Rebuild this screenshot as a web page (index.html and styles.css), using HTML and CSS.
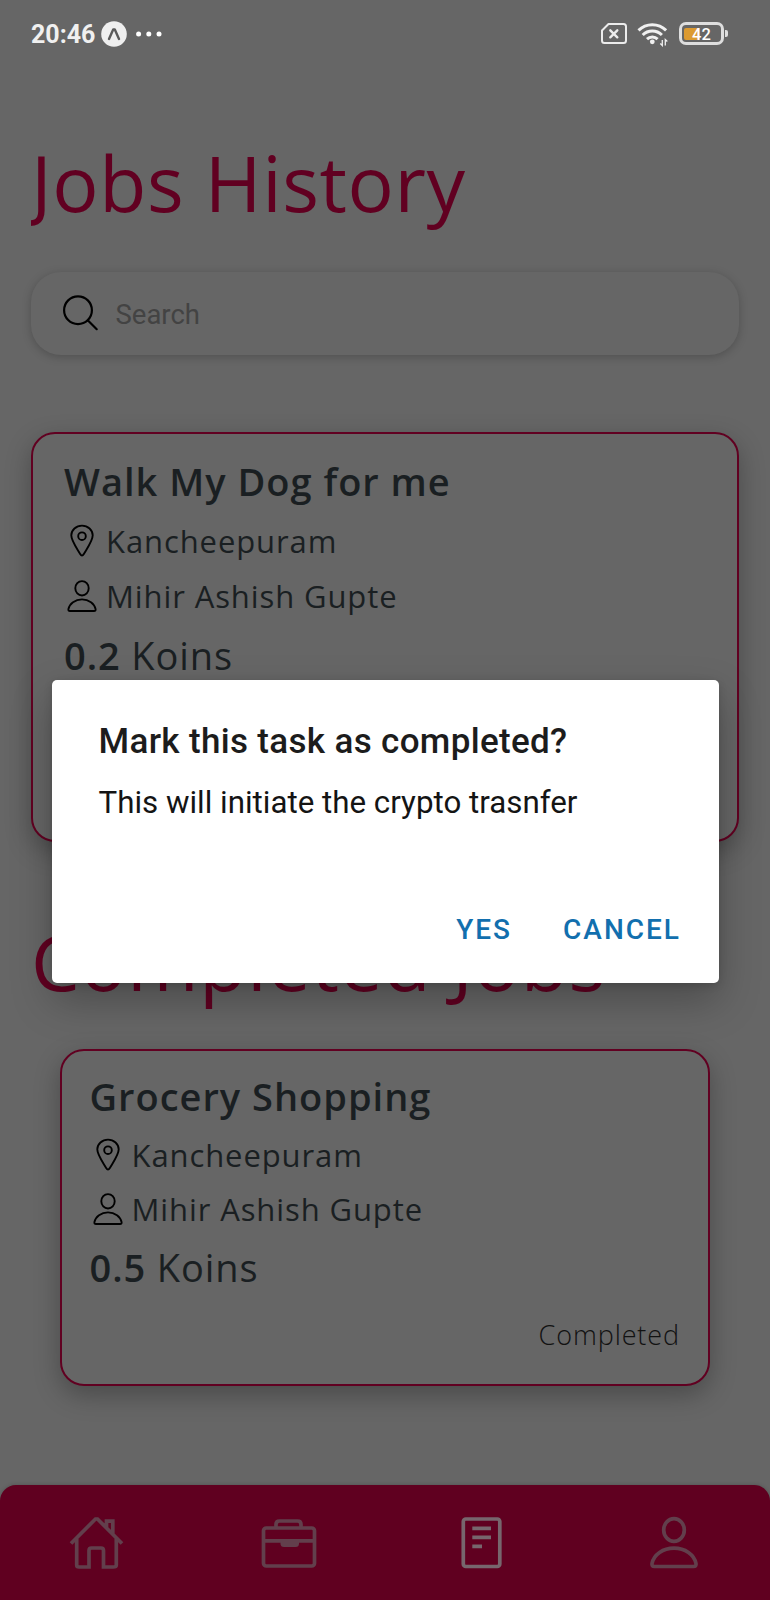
FILE: index.html
```html
<!DOCTYPE html>
<html lang="en">
<head>
<meta charset="utf-8">
<title>Jobs History</title>
<link rel="stylesheet" href="styles.css">
</head>
<body>
<svg class="sprite" width="0" height="0" aria-hidden="true">
  <symbol id="pin" viewBox="0 0 36 36"><path d="M18 32.6C17 32.6 16.6 31.7 16 30.7 13 25.500 7.300 17.800 7.300 12.300a10.700 9.700 0 0 1 21.400 0C28.700 17.800 23 25.500 20 30.700 19.400 31.700 19 32.600 18 32.600Z"/><circle cx="18" cy="13.200" r="3.800"/></symbol>
  <symbol id="person" viewBox="0 0 36 36"><ellipse cx="18" cy="10.300" rx="6.700" ry="7.200"/><path d="M6 33C4.800 33 4.200 32.400 4.400 31.200 5.400 25.500 11.200 21.400 18 21.400s12.600 4.100 13.600 9.800C31.800 32.400 31.200 33 30 33Z"/></symbol>
</svg>
<div class="screen">
  <header class="status">
    <span class="time">20:46</span>
    <svg class="badge" width="26" height="26" viewBox="0 0 26 26"><circle cx="13" cy="13" r="12.800" fill="#efefef"/><path d="M8 18 12.200 8.500h1.600L18 18" fill="none" stroke="#5b5b5b" stroke-width="2.400" stroke-linecap="round" stroke-linejoin="round"/></svg>
    <svg class="dots" width="26" height="6" viewBox="0 0 26 6" fill="#fff"><circle cx="2.600" cy="3" r="2.500"/><circle cx="12.800" cy="3" r="2.500"/><circle cx="23" cy="3" r="2.500"/></svg>
    <svg class="sim" width="28" height="24" viewBox="0 0 28 24" fill="none" stroke="#ececec" stroke-width="2" stroke-linejoin="round" stroke-linecap="round"><path d="M8.500 2H23.500Q26 2 26 4.500V18.500Q26 21 23.500 21H4.500Q2 21 2 18.500V8.500Z"/><path d="m10.300 8.300 7 7m0-7-7 7" stroke-width="2.400"/></svg>
    <svg class="wifi" width="32" height="26" viewBox="0 0 32 26" fill="none" stroke="#f0f0f0" stroke-width="3"><path d="M1.500 9.400a19.500 19.500 0 0 1 27.600 0M5.700 14a13.500 13.500 0 0 1 19.200 0M10 18.200a7.600 7.600 0 0 1 10.600 0"/><circle cx="15.300" cy="20.800" r="2.400" fill="#f0f0f0" stroke="none"/><path d="M25.300 19v5.500l-2-2M28.300 24.500V18.500l2 2" stroke-width="1.300"/></svg>
    <span class="battery"><span class="charge"></span><span class="level">42</span></span>
    <span class="tip"></span>
  </header>

  <main class="content">
    <h1 class="heading first">Jobs History</h1>
    <div class="search">
      <svg width="38" height="38" viewBox="0 0 38 38" fill="none" stroke="#000" stroke-width="2.200" stroke-linecap="round"><circle cx="16" cy="16.200" r="13.900"/><path d="m26 26.500 8.700 8.700"/></svg>
      <span class="hint">Search</span>
    </div>

    <section class="card active">
      <h2 class="job">Walk My Dog for me</h2>
      <div class="row"><svg class="icon"><use href="#pin"/></svg><span>Kancheepuram</span></div>
      <div class="row"><svg class="icon"><use href="#person"/></svg><span>Mihir Ashish Gupte</span></div>
      <div class="price"><b>0.2</b> Koins</div>
    </section>

    <h1 class="heading second">Completed Jobs</h1>
    <section class="card done">
      <h2 class="job">Grocery Shopping</h2>
      <div class="row"><svg class="icon"><use href="#pin"/></svg><span>Kancheepuram</span></div>
      <div class="row"><svg class="icon"><use href="#person"/></svg><span>Mihir Ashish Gupte</span></div>
      <div class="price"><b>0.5</b> Koins</div>
      <div class="state">Completed</div>
    </section>
  </main>

  <nav class="tabs">
    <svg width="56" height="56" viewBox="0 0 56 56"><path d="m3 27.500L27.500 3h2L54 27.500M8.700 22.500V49Q8.700 51 11 51H21V34.500Q21 32 23.500 32H33Q35.500 32 35.500 34.500V51H45Q48.300 51 48.300 49V22.500M38.500 12.500V5.200H44.800V18"/></svg>
    <svg width="56" height="56" viewBox="0 0 56 56"><rect x="2.500" y="12" width="51" height="38" rx="2.800"/><path d="M15 11V8.500Q15 5 18.500 5H36.500Q40 5 40 8.500V11M3 24.800H53"/><path class="solid" d="M19.500 25H38V27.500Q38 31 34.500 31H23Q19.500 31 19.500 27.500Z"/></svg>
    <svg class="selected" width="56" height="56" viewBox="0 0 56 56"><rect x="10.300" y="3" width="36.500" height="47.500" rx="2.500"/><path d="M19.300 12.300H38M19.300 21.300H38M19.300 30.300H29"/></svg>
    <svg width="56" height="56" viewBox="0 0 56 56"><ellipse cx="28" cy="14" rx="10.300" ry="11.300"/><path d="M8.500 50.500Q5.500 50.500 6 47.500C7.800 38.500 17 32.200 28 32.200S48.200 38.500 50 47.500Q50.500 50.500 47.500 50.500Z"/></svg>
  </nav>

  <div class="overlay">
    <div class="dialog" role="dialog">
      <div class="dialog-title">Mark this task as completed?</div>
      <div class="dialog-text">This will initiate the crypto trasnfer</div>
      <div class="actions"><span class="yes">YES</span><span class="cancel">CANCEL</span></div>
    </div>
  </div>
</div>
</body>
</html>
```
FILE: styles.css
```css
* { box-sizing: border-box; }
body { margin: 0; background: #666; }
.sprite { display: block; }
.screen { position: relative; width: 770px; height: 1600px; overflow: hidden; display: flex; flex-direction: column; background: #666; font-family: "Open Sans", sans-serif; color: #1a1f22; white-space: nowrap; }

.status { height: 68px; flex: none; display: flex; align-items: center; padding: 0 42px 0 31px; font-family: Roboto, sans-serif; color: #f0f0f0; }
.time { width: 69.500px; padding-top: 1px; font-size: 25px; font-weight: 700; line-height: 30px; }
.badge { margin-top: -1px; }
.dots { margin-left: 9px; margin-top: -1px; }
.sim { margin-left: auto; margin-top: 0; }
.wifi { margin-left: 9px; }
.battery { position: relative; width: 45px; height: 23px; margin-left: 10px; margin-top: -1px; padding: 3px; border: 3px solid #dedede; border-radius: 7px; }
.charge { display: block; width: 15px; height: 12px; margin: -.5px 0 0 -1px; border-radius: 2px; background: #dc9a30; }
.level { position: absolute; inset: 0; text-align: center; font-size: 16.500px; line-height: 19px; font-weight: 500; color: #fff; }
.tip { width: 3px; height: 7px; margin: -1px 0 0 1px; border-radius: 0 2px 2px 0; background: #dedede; }

.content { padding: 65px 31px 0; }
.heading { margin: 0; overflow: hidden; font-size: 77px; line-height: 100px; font-weight: 400; letter-spacing: .6px; color: #610021; }
.search { display: flex; align-items: center; height: 83px; margin-top: 39px; padding: 0 0 1px 31px; border-radius: 30px; background: #666; box-shadow: 0 2px 10px rgba(0,0,0,.22); }
.hint { margin-left: 15.500px; padding-top: 4px; font: 400 27.500px/40px Roboto, sans-serif; color: #434343; }

.card { border: 2px solid #610021; border-radius: 24px; background: #666; box-shadow: 0 9px 26px rgba(0,0,0,.28); }
.active { height: 410px; margin-top: 77px; padding: 17px 31px 0 31px; }
.active .job { margin-bottom: 2px; }
.active .price { margin-top: 2px; }
.second { margin-top: 70px; letter-spacing: .75px; }
.done { height: 337px; margin: 37px 29px 0; padding: 15px 28px 0 27.500px; }
.job { margin: 0 0 2px; font-size: 38px; line-height: 60px; font-weight: 600; letter-spacing: 1px; }
.row { display: flex; align-items: center; height: 55px; font-size: 31px; letter-spacing: .9px; }
.done .row { height: 54px; }
.icon { width: 36px; height: 36px; margin-right: 6px; fill: none; stroke: #000; stroke-width: 1.900; }
.price { margin-top: 1px; font-size: 38px; line-height: 60px; letter-spacing: .9px; }
.price b { font-weight: 600; }
.state { margin-top: 18px; text-align: right; font-size: 27px; line-height: 40px; font-weight: 300; letter-spacing: .9px; color: #121212; }

.tabs { display: flex; justify-content: space-around; align-items: center; height: 115px; flex: none; margin-top: auto; padding-top: 2px; border-radius: 16px 16px 0 0; background: #600020; box-shadow: 0 0 4px rgba(0,0,0,.2); fill: none; stroke: #623f4c; stroke-width: 3.700; }
.tabs .solid { fill: #623f4c; stroke: none; }
.tabs .selected { stroke: #77666d; }

.overlay { position: absolute; inset: 0; padding: 680px 51px 0 51.500px; }
.dialog { height: 303px; padding: 37px 38px 0 47px; border-radius: 5px; background: #fff; box-shadow: 0 18px 40px rgba(0,0,0,.26), 0 2px 8px rgba(0,0,0,.14); font-family: Roboto, sans-serif; }
.dialog-title { font-size: 35px; line-height: 50px; font-weight: 500; letter-spacing: .33px; color: #1c1c1c; }
.dialog-text { margin-top: 11px; font-size: 31.300px; line-height: 50px; color: #141414; }
.actions { display: flex; justify-content: flex-end; gap: 51px; margin-top: 77px; font-size: 28px; line-height: 50px; font-weight: 500; letter-spacing: 2px; color: #126fae; }
```
